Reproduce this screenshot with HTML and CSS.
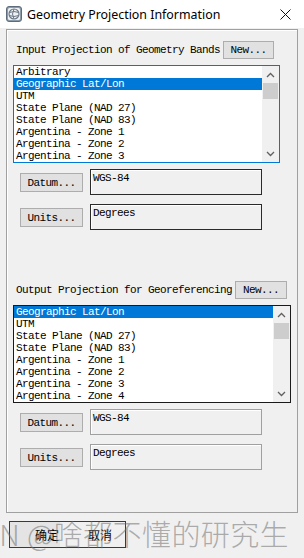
FILE: index.html
```html
<!DOCTYPE html>
<html>
<head>
<meta charset="utf-8">
<link rel="stylesheet" href="styles.css">
</head>
<body>
<div class="window">
  <div class="titlebar">
    <svg class="appicon" width="16" height="16" viewBox="0 0 16 16">
      <rect x="0.5" y="0.5" width="15" height="15" rx="2.5" fill="#8d9aa8" stroke="#5d6b7a"/>
      <rect x="2" y="2" width="12" height="12" rx="1.5" fill="#eef1f4"/>
      <circle cx="8" cy="8" r="5" fill="none" stroke="#6b7886" stroke-width="1.2"/>
      <path d="M3.5 6.5 Q8 4.5 12.5 6.5 M3.2 9.5 Q8 11.5 12.8 9.5 M8 3 Q5 8 8 13" fill="none" stroke="#6b7886" stroke-width="1"/>
    </svg>
    <span class="title">Geometry Projection Information</span>
    <svg class="close" width="11" height="11" viewBox="0 0 11 11">
      <path d="M0.5 0.5 L10.5 10.5 M10.5 0.5 L0.5 10.5" stroke="#111" stroke-width="1"/>
    </svg>
  </div>

  <div class="panel">
    <div class="hdr hdr-a">
      <span class="label">Input Projection of Geometry Bands</span>
      <div class="btn new new-a">New...</div>
    </div>
    <div class="list list-a">
      <div class="items">
        <div class="item">Arbitrary</div>
        <div class="item sel">Geographic Lat/Lon</div>
        <div class="item">UTM</div>
        <div class="item">State Plane (NAD 27)</div>
        <div class="item">State Plane (NAD 83)</div>
        <div class="item">Argentina - Zone 1</div>
        <div class="item">Argentina - Zone 2</div>
        <div class="item">Argentina - Zone 3</div>
      </div>
      <div class="scroll">
        <div class="arrow"><svg width="9" height="6" viewBox="0 0 9 6"><path d="M1 5 L4.5 1.5 L8 5" fill="none" stroke="#606060" stroke-width="1.3"/></svg></div>
        <div class="thumb"></div>
        <div class="track"></div>
        <div class="arrow"><svg width="9" height="6" viewBox="0 0 9 6"><path d="M1 1 L4.5 4.5 L8 1" fill="none" stroke="#606060" stroke-width="1.3"/></svg></div>
      </div>
    </div>
    <div class="field f-datum-a">
      <div class="btn side">Datum...</div>
      <div class="box dark">WGS-84</div>
    </div>
    <div class="field f-units">
      <div class="btn side">Units...</div>
      <div class="box dark">Degrees</div>
    </div>

    <div class="hdr hdr-b">
      <span class="label">Output Projection for Georeferencing</span>
      <div class="btn new new-b">New...</div>
    </div>
    <div class="list list-b">
      <div class="items">
        <div class="item sel">Geographic Lat/Lon</div>
        <div class="item">UTM</div>
        <div class="item">State Plane (NAD 27)</div>
        <div class="item">State Plane (NAD 83)</div>
        <div class="item">Argentina - Zone 1</div>
        <div class="item">Argentina - Zone 2</div>
        <div class="item">Argentina - Zone 3</div>
        <div class="item">Argentina - Zone 4</div>
      </div>
      <div class="scroll">
        <div class="arrow"><svg width="9" height="6" viewBox="0 0 9 6"><path d="M1 5 L4.5 1.5 L8 5" fill="none" stroke="#606060" stroke-width="1.3"/></svg></div>
        <div class="thumb"></div>
        <div class="track"></div>
        <div class="arrow"><svg width="9" height="6" viewBox="0 0 9 6"><path d="M1 1 L4.5 4.5 L8 1" fill="none" stroke="#606060" stroke-width="1.3"/></svg></div>
      </div>
    </div>
    <div class="field f-datum-b">
      <div class="btn side">Datum...</div>
      <div class="box light">WGS-84</div>
    </div>
    <div class="field f-units">
      <div class="btn side">Units...</div>
      <div class="box light">Degrees</div>
    </div>
  </div>

  <div class="footer">
    <div class="okcancel">
      <span class="ok">确定</span>
      <span class="cancel">取消</span>
    </div>
  </div>

  <div class="watermark">CSDN @啥都不懂的研究生</div>
</div>
</body>
</html>
```

FILE: styles.css
```css
* { box-sizing: border-box; }
html, body { margin: 0; padding: 0; }
body {
  width: 304px;
  height: 558px;
  overflow: hidden;
  background: #f0f0f0;
}
.window {
  position: relative;
  width: 304px;
  height: 558px;
  overflow: hidden;
  background: #f0f0f0;
  font-family: "Liberation Mono", "Noto Sans CJK SC", monospace;
  font-size: 11px;
  letter-spacing: -0.6px;
  color: #000;
}
.titlebar {
  height: 28px;
  background: #fff;
  display: flex;
  align-items: center;
  padding-left: 6px;
}
.appicon { flex: none; }
.title {
  font-family: "Noto Sans", sans-serif;
  font-size: 12.4px;
  letter-spacing: 0;
  margin-left: 5px;
  flex: 1;
  color: #000;
}
.close { flex: none; margin-right: 13px; }

.panel {
  margin-top: 1px;
  margin-left: 6px;
  width: 292px;
  height: 484px;
  border: 1px solid #a0a0a0;
  box-shadow: inset 1px 1px 0 #fff;
  padding: 11px 0 0 6px;
}
.hdr {
  display: flex;
  align-items: center;
  height: 18px;
}
.label { margin-left: 3px; white-space: nowrap; }
.btn {
  background: #e1e1e1;
  border: 1px solid #adadad;
  display: flex;
  align-items: center;
  justify-content: center;
  white-space: nowrap;
}
.new { height: 18px; margin-left: 3px; }
.new-a { width: 51px; }
.new-b { width: 52px; }
.hdr-b { margin-top: 51px; }

.list {
  display: flex;
  height: 98px;
  background: #fff;
  border: 1px solid #1a1a1a;
}
.list-a { width: 267px; margin-top: 6px; border-color: #0078d7; }
.list-b { width: 278px; margin-top: 6px; }
.items { flex: 1; }
.item {
  height: 12px;
  line-height: 12px;
  padding-left: 2px;
  white-space: nowrap;
}
.item.sel { background: #0078d7; color: #fff; }
.scroll {
  width: 17px;
  flex: none;
  background: #f0f0f0;
  display: flex;
  flex-direction: column;
}
.arrow {
  height: 17px;
  display: flex;
  align-items: center;
  justify-content: center;
}
.thumb { height: 16px; background: #cdcdcd; margin: 0 1px; }
.track { flex: 1; }

.field {
  display: flex;
  margin-left: 7px;
}
.side { width: 63px; height: 19px; margin-top: 4px; }
.box {
  margin-left: 7px;
  width: 172px;
  height: 26px;
  padding: 2px 0 0 2px;
  line-height: 12px;
}
.box.dark {
  border: 1px solid #2a2a2a;
  box-shadow: inset 1px 1px 0 #fff;
}
.box.light {
  border: 1px solid #a0a0a0;
  box-shadow: inset 1px 1px 0 #fff;
}
.f-datum-a { margin-top: 6px; }
.f-datum-b { margin-top: 6px; }
.f-units { margin-top: 9px; }

.footer {
  padding: 8px 0 0 9px;
}
.okcancel {
  width: 117px;
  height: 27px;
  border: 1px solid #3a3a3a;
  display: flex;
  align-items: center;
  font-family: "Noto Sans CJK SC", sans-serif;
  font-size: 12px;
  letter-spacing: 0;
  background: linear-gradient(to right, #e4e4e4 0, #e4e4e4 50px, #f0f0f0 50px);
}
.ok { margin-left: 25px; }
.cancel { margin-left: 29px; }

.watermark {
  position: absolute;
  right: 15px;
  top: 516px;
  white-space: nowrap;
  font-family: "Noto Sans CJK SC", sans-serif;
  font-weight: 300;
  font-size: 29px;
  line-height: 34px;
  letter-spacing: 0.4px;
  color: rgba(110, 110, 110, 0.55);
}
```
